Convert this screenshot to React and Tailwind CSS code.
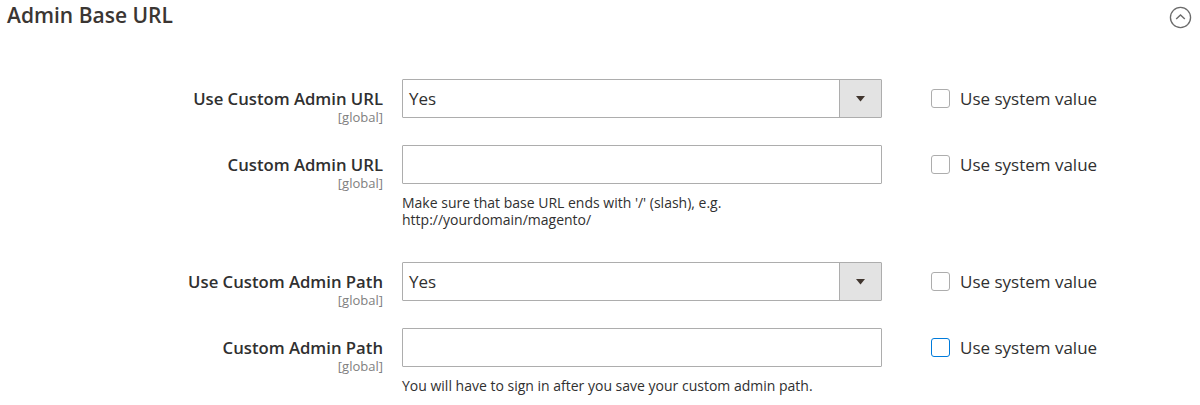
import React from 'react';

const rows = [
  { label: 'Use Custom Admin URL', type: 'select', value: 'Yes', h: 'h-[66px]' },
  {
    label: 'Custom Admin URL',
    type: 'input',
    note: ["Make sure that base URL ends with '/' (slash), e.g.", 'http://yourdomain/magento/'],
    h: 'h-[117px]',
  },
  { label: 'Use Custom Admin Path', type: 'select', value: 'Yes', h: 'h-[66px]' },
  {
    label: 'Custom Admin Path',
    type: 'input',
    note: ['You will have to sign in after you save your custom admin path.'],
    focused: true,
    h: 'h-[76px]',
  },
];

const Field = ({ row }) => {
  return (
    <div className={`grid grid-cols-[383px_480px_1fr] gap-x-[19px] items-start ${row.h}`}>
      <div className="text-right pt-[10px]">
        <div className="text-[16.7px] leading-[20px] font-semibold text-[#303030]">{row.label}</div>
        <div className="text-[13px] leading-[16px] text-[#808080]">[global]</div>
      </div>

      <div>
        {row.type === 'select' ? (
          <div className="flex h-[39px] border border-[#adadad] rounded-[1px] bg-white">
            <div className="flex-1 flex items-center pl-[6px] text-[17px] text-[#303030]">{row.value}</div>
            <div className="w-[42px] flex items-center justify-center bg-[#e3e3e3] border-l border-[#adadad]">
              <svg width="9" height="6" viewBox="0 0 9 6">
                <path d="M0 0 L9 0 L4.5 5.5 Z" fill="#41362f" />
              </svg>
            </div>
          </div>
        ) : (
          <div className="h-[39px] border border-[#adadad] rounded-[1px] bg-white"></div>
        )}
        {row.note && (
          <div className="mt-[10px] text-[14px] leading-[17px] text-[#303030]">
            {row.note.map((line) => (
              <div key={line}>{line}</div>
            ))}
          </div>
        )}
      </div>

      <div className="flex items-start pl-[30px] pt-[10px] gap-[10px]">
        <span
          className={`w-[19px] h-[19px] rounded-[3px] border bg-white ${
            row.focused ? 'border-[#007bdb]' : 'border-[#adadad]'
          }`}
        ></span>
        <span className="text-[17px] leading-[19px] text-[#303030]">Use system value</span>
      </div>
    </div>
  );
};

const App = () => {
  return (
    <div className="w-[1200px] h-[405px] bg-white overflow-hidden font-['Open_Sans',sans-serif]">
      <div className="flex justify-between items-start pl-[7px] pr-[8px] pt-[1px]">
        <h2 className="text-[21px] leading-[28px] font-semibold text-[#3b3633]">Admin Base URL</h2>
        <svg width="23" height="23" viewBox="0 0 24 24" className="mt-[5px]">
          <circle cx="12" cy="12" r="10.5" fill="none" stroke="#6b6b6b" strokeWidth="1.4" />
          <path d="M7.5 13.5 L12 9.3 L16.5 13.5" fill="none" stroke="#6b6b6b" strokeWidth="1.5" />
        </svg>
      </div>

      <div className="mt-[50px]">
        {rows.map((row) => (
          <Field key={row.label} row={row} />
        ))}
      </div>
    </div>
  );
};

export default App;
